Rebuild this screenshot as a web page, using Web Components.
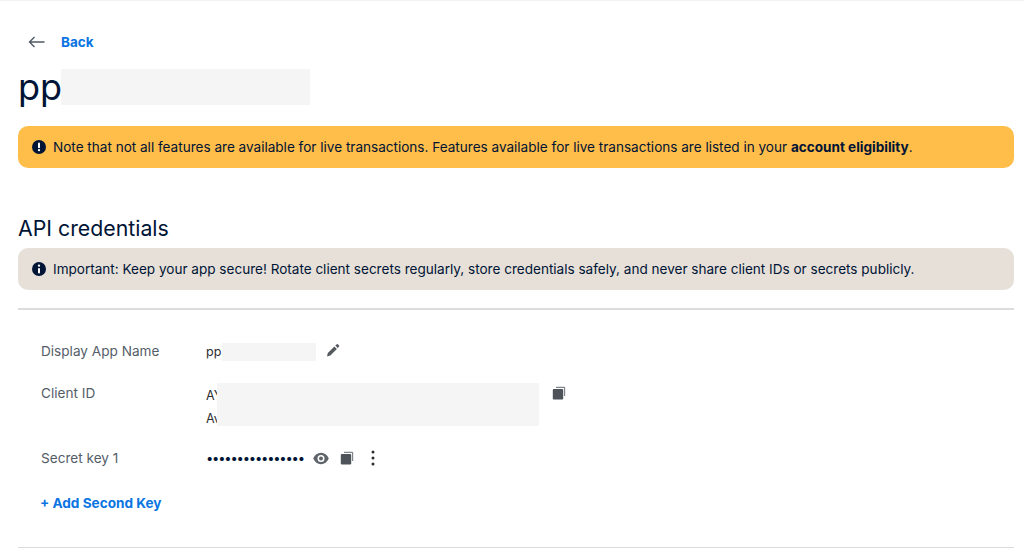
<!DOCTYPE html>
<html>
<head>
<meta charset="utf-8">
<title>API credentials</title>
<style>
    html, body { margin: 0; background: #fff; }
    body { font-family: Inter, "Liberation Sans", sans-serif; color: #001435; }
</style>
</head>
<body>
<app-page></app-page>
<script>
const ICONS = {
    alert: '<svg viewBox="0 0 16 16" width="16" height="16"><circle cx="8" cy="8" r="7" fill="#001435"/><rect x="7" y="3.6" width="2" height="5.6" rx="1" fill="#fff"/><circle cx="8" cy="11.2" r="1.15" fill="#fff"/></svg>',
    info: '<svg viewBox="0 0 16 16" width="16" height="16"><circle cx="8" cy="8" r="7" fill="#001435"/><rect x="7" y="6.9" width="2" height="5.6" rx="1" fill="#fff"/><circle cx="8" cy="4.7" r="1.15" fill="#fff"/></svg>',
    pencil: '<svg viewBox="0 0 16 16" width="16" height="16"><path d="M2 14.500l.8-3.400 6.600-6.600 2.500 2.500-6.600 6.600z" fill="#55595e"/><path d="M10.300 3.600l1.200-1.200a1.100 1.100 0 0 1 1.600 0l.8.8a1.100 1.100 0 0 1 0 1.600l-1.200 1.200z" fill="#55595e"/></svg>',
    copy: '<svg viewBox="0 0 14 14" width="14" height="14"><path d="M4 .8h8.200a1 1 0 0 1 1 1V10h-1.200V2H4z" fill="#80858b"/><rect x="0.800" y="3" width="10.400" height="10.400" rx="1" fill="#4d5359"/></svg>',
    eye: '<svg viewBox="0 0 16 13" width="16" height="13"><path fill-rule="evenodd" d="M8 .8C4.600.8 1.700 3 .2 6.500c1.500 3.500 4.400 5.700 7.800 5.700s6.300-2.200 7.800-5.700C14.300 3 11.400.8 8 .8zM8 10a3.500 3.500 0 1 1 0-7 3.500 3.500 0 0 1 0 7z" fill="#5f646a"/><circle cx="8" cy="6.500" r="2" fill="#5f646a"/></svg>',
    dots: '<svg viewBox="0 0 4 16" width="4" height="16"><circle cx="2" cy="2" r="1.500" fill="#2c2e2f"/><circle cx="2" cy="8" r="1.500" fill="#2c2e2f"/><circle cx="2" cy="14" r="1.500" fill="#2c2e2f"/></svg>',
    back: '<svg viewBox="0 0 18 12" width="18" height="12"><path d="M16.500 6H1.500M6.500 1L1.500 6l5 5" fill="none" stroke="#515a66" stroke-width="1.400"/></svg>'
};

// grey block standing in for a blanked out value, it lies over the end of the text
class MaskBlock extends HTMLElement {
    connectedCallback() {
        this.attachShadow({ mode: 'open' }).innerHTML = `
            <style>
                :host { display: block; position: relative; background: #f5f5f5; }
            </style>
        `;
    }
}

class NoticeBanner extends HTMLElement {
    connectedCallback() {
        const tone = this.getAttribute('tone');
        this.attachShadow({ mode: 'open' }).innerHTML = `
            <style>
                :host {
                    display: flex;
                    align-items: center;
                    gap: 6px;
                    height: 41.5px;
                    padding-left: 13px;
                    border-radius: 10px;
                    font-size: 13.55px;
                    color: #001435;
                    background: ${tone === 'warning' ? '#ffbd4a' : '#e6e0d9'};
                }
                svg { display: block; flex: none; }
                ::slotted(b) { font-weight: 700; }
            </style>
            ${tone === 'warning' ? ICONS.alert : ICONS.info}
            <div><slot></slot></div>
        `;
    }
}

class CredentialRow extends HTMLElement {
    connectedCallback() {
        this.attachShadow({ mode: 'open' }).innerHTML = `
            <style>
                :host {
                    display: grid;
                    grid-template-columns: 165px 1fr;
                    font-size: 13.6px;
                    line-height: 20px;
                }
                .label { color: #545d68; }
            </style>
            <div class="label">${this.getAttribute('label')}</div>
            <div><slot></slot></div>
        `;
    }
}

class AppPage extends HTMLElement {
    connectedCallback() {
        this.attachShadow({ mode: 'open' }).innerHTML = `
            <style>
                :host {
                    display: block;
                    height: 548px;
                    box-sizing: border-box;
                    padding: 0 10px 0 18px;
                    border-top: 1px solid #f2f2f2;
                    overflow: hidden;
                }
                svg { display: block; flex: none; }
                .back {
                    display: flex;
                    align-items: center;
                    gap: 15px;
                    height: 20px;
                    margin: 31px 0 0 10px;
                    font-size: 13.5px;
                    font-weight: 700;
                    color: #0a75e2;
                }
                .title {
                    display: flex;
                    align-items: flex-start;
                    height: 37px;
                    margin-top: 17px;
                }
                h1 {
                    margin: -4px 0 0;
                    width: 43px;
                    font-size: 36px;
                    line-height: 44px;
                    font-weight: 400;
                }
                .title mask-block { width: 249px; height: 36px; }
                .warning { margin-top: 20px; }
                h2 {
                    margin: 45.5px 0 0;
                    font-size: 21.3px;
                    line-height: 30px;
                    font-weight: 400;
                }
                .secure { margin-top: 5px; }
                hr { border: 0; border-top: 2px solid #dcdcdc; margin: 18px 0 0; }
                .rows { padding: 31.5px 0 0 23px; }
                .value {
                    font-size: 12.5px;
                    color: #2c2e2f;
                    white-space: nowrap;
                    padding-top: 1px;
                }
                .name { display: flex; align-items: flex-start; height: 22px; }
                .name .value { width: 16px; }
                .name mask-block { width: 94px; height: 18px; margin-top: 2px; }
                .name svg { margin: 1px 0 0 9px; }
                .client { margin-top: 20px; }
                .client-value { display: flex; align-items: flex-start; height: 43px; }
                .client .value { width: 11px; line-height: 23px; }
                .client mask-block { width: 322px; height: 43px; }
                .client svg { margin: 3px 0 0 13px; }
                .secret { margin-top: 22px; }
                .secret-value { display: flex; align-items: center; height: 20px; }
                .dots {
                    width: 98px;
                    font-size: 13px;
                    letter-spacing: -1.2px;
                    color: #001435;
                    white-space: nowrap;
                }
                .secret-value svg:nth-of-type(1) { margin-left: 9px; }
                .secret-value svg:nth-of-type(2) { margin-left: 11px; }
                .secret-value svg:nth-of-type(3) { margin-left: 17px; }
                .add {
                    margin: 25px 0 0 -1px;
                    font-size: 13.6px;
                    font-weight: 700;
                    line-height: 20px;
                    color: #0a75e2;
                }
                .end { margin-top: 34px; border-top-width: 1px; }
            </style>
            <div class="back">${ICONS.back}<span>Back</span></div>
            <div class="title"><h1>pp</h1><mask-block></mask-block></div>
            <notice-banner class="warning" tone="warning">Note that not all features are available for live transactions. Features available for live transactions are listed in your <b>account eligibility</b>.</notice-banner>
            <h2>API credentials</h2>
            <notice-banner class="secure">Important: Keep your app secure! Rotate client secrets regularly, store credentials safely, and never share client IDs or secrets publicly.</notice-banner>
            <hr>
            <div class="rows">
                <credential-row label="Display App Name">
                    <div class="name"><div class="value">pp</div><mask-block></mask-block>${ICONS.pencil}</div>
                </credential-row>
                <credential-row class="client" label="Client ID">
                    <div class="client-value">
                        <div class="value">AY<br>Av</div><mask-block></mask-block>${ICONS.copy}
                    </div>
                </credential-row>
                <credential-row class="secret" label="Secret key 1">
                    <div class="secret-value"><div class="dots">••••••••••••••••</div>${ICONS.eye}${ICONS.copy}${ICONS.dots}</div>
                </credential-row>
                <div class="add">+ Add Second Key</div>
            </div>
            <hr class="end">
        `;
    }
}

customElements.define('mask-block', MaskBlock);
customElements.define('notice-banner', NoticeBanner);
customElements.define('credential-row', CredentialRow);
customElements.define('app-page', AppPage);
</script>
</body>
</html>
